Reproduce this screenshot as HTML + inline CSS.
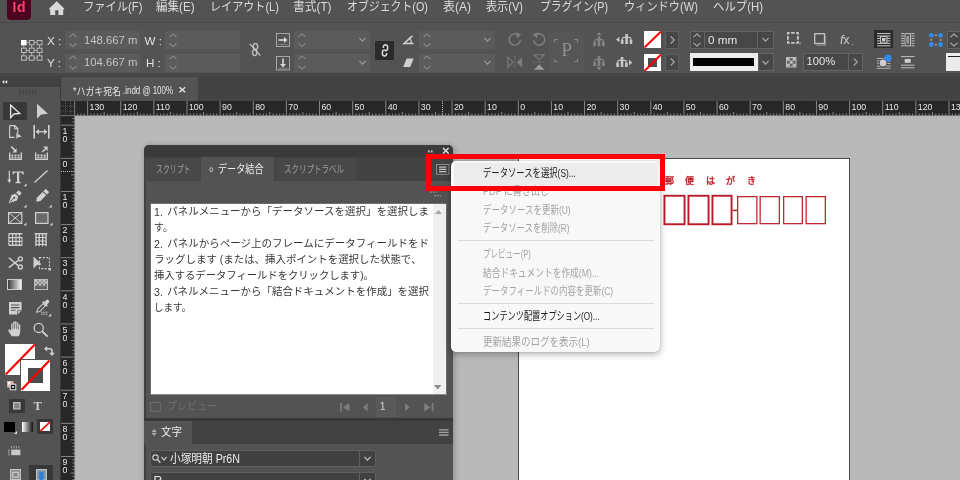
<!DOCTYPE html>
<html lang="ja"><head><meta charset="utf-8"><title>InDesign</title><style>
html,body{margin:0;padding:0}
body{width:960px;height:480px;overflow:hidden;position:relative;background:#b9b9b9;font-family:"Liberation Sans",sans-serif;filter:blur(0.45px)}
.b{position:absolute;box-sizing:border-box}
.l{position:absolute;white-space:nowrap}
.t{position:absolute;overflow:hidden;white-space:nowrap}
.t svg{position:absolute;left:0;top:0;display:block}
.t text{font-family:"Liberation Sans","Noto Sans CJK JP",sans-serif}
.i{position:absolute;display:block;overflow:visible}
</style></head>
<body>
<div class="b " style="left:0px;top:0px;width:960px;height:23px;background:#535353;"></div>
<div class="b " style="left:0px;top:22px;width:960px;height:2px;background:#494949;"></div>
<div class="b " style="left:0px;top:23px;width:960px;height:50px;background:#535353;"></div>
<div class="b " style="left:0px;top:73px;width:960px;height:3.5px;background:#474747;"></div>
<div class="b " style="left:0px;top:76px;width:960px;height:25px;background:#434343;"></div>
<div class="b " style="left:61px;top:77px;width:137px;height:24px;background:#535353;"></div>
<div class="b " style="left:61px;top:101px;width:899px;height:15px;background:#272727;"></div>
<div class="b " style="left:61px;top:101px;width:14px;height:379px;background:#272727;"></div>
<div class="b " style="left:0px;top:77px;width:60px;height:403px;background:#535353;"></div>
<div class="b " style="left:0px;top:76px;width:60px;height:11px;background:#414141;"></div>
<div class="b " style="left:60px;top:77px;width:1px;height:403px;background:#3a3a3a;"></div>
<div class="b" style="left:7px;top:-4px;width:24px;height:23.5px;background:#4b0520;border-radius:4px"></div><div class="l" style="left:12.6px;top:-0.6px;font-size:14px;line-height:16px;font-weight:bold;color:#ff3e6c;letter-spacing:0.6px">Id</div>
<svg class="i" style="left:49px;top:1px" width="16" height="15" viewBox="0 0 16 15" ><path d="M7.7 0.3 L15.2 7.4 L15.2 8.4 L14.2 8.4 L14.2 14 L9.4 14 L9.4 9.3 L6.2 9.3 L6.2 14 L1.2 14 L1.2 8.4 L0.2 8.4 L0.2 7.4 Z" fill="#d9d9d9"/></svg>
<div class="t " style="left:83px;top:-0.74px;width:61.5px;height:15.6px;font-size:12px"><svg width="61.5" height="15.6" viewBox="0 0 61.5 15.6"><text x="0" y="12" font-size="12" fill="#dcdcdc" textLength="59.5" lengthAdjust="spacingAndGlyphs">ファイル(F)</text></svg></div>
<div class="t " style="left:156px;top:-0.74px;width:40.5px;height:15.6px;font-size:12px"><svg width="40.5" height="15.6" viewBox="0 0 40.5 15.6"><text x="0" y="12" font-size="12" fill="#dcdcdc" textLength="38.5" lengthAdjust="spacingAndGlyphs">編集(E)</text></svg></div>
<div class="t " style="left:210px;top:-0.74px;width:71px;height:15.6px;font-size:12px"><svg width="71" height="15.6" viewBox="0 0 71 15.6"><text x="0" y="12" font-size="12" fill="#dcdcdc" textLength="69" lengthAdjust="spacingAndGlyphs">レイアウト(L)</text></svg></div>
<div class="t " style="left:292.5px;top:-0.74px;width:40.5px;height:15.6px;font-size:12px"><svg width="40.5" height="15.6" viewBox="0 0 40.5 15.6"><text x="0" y="12" font-size="12" fill="#dcdcdc" textLength="38.5" lengthAdjust="spacingAndGlyphs">書式(T)</text></svg></div>
<div class="t " style="left:347px;top:-0.74px;width:83px;height:15.6px;font-size:12px"><svg width="83" height="15.6" viewBox="0 0 83 15.6"><text x="0" y="12" font-size="12" fill="#dcdcdc" textLength="81" lengthAdjust="spacingAndGlyphs">オブジェクト(O)</text></svg></div>
<div class="t " style="left:443px;top:-0.74px;width:30px;height:15.6px;font-size:12px"><svg width="30" height="15.6" viewBox="0 0 30 15.6"><text x="0" y="12" font-size="12" fill="#dcdcdc" textLength="28" lengthAdjust="spacingAndGlyphs">表(A)</text></svg></div>
<div class="t " style="left:486px;top:-0.74px;width:39px;height:15.6px;font-size:12px"><svg width="39" height="15.6" viewBox="0 0 39 15.6"><text x="0" y="12" font-size="12" fill="#dcdcdc" textLength="37" lengthAdjust="spacingAndGlyphs">表示(V)</text></svg></div>
<div class="t " style="left:540px;top:-0.74px;width:70px;height:15.6px;font-size:12px"><svg width="70" height="15.6" viewBox="0 0 70 15.6"><text x="0" y="12" font-size="12" fill="#dcdcdc" textLength="68" lengthAdjust="spacingAndGlyphs">プラグイン(P)</text></svg></div>
<div class="t " style="left:624px;top:-0.74px;width:76px;height:15.6px;font-size:12px"><svg width="76" height="15.6" viewBox="0 0 76 15.6"><text x="0" y="12" font-size="12" fill="#dcdcdc" textLength="74" lengthAdjust="spacingAndGlyphs">ウィンドウ(W)</text></svg></div>
<div class="t " style="left:713px;top:-0.74px;width:52px;height:15.6px;font-size:12px"><svg width="52" height="15.6" viewBox="0 0 52 15.6"><text x="0" y="12" font-size="12" fill="#dcdcdc" textLength="50" lengthAdjust="spacingAndGlyphs">ヘルプ(H)</text></svg></div>
<svg class="i" style="left:20.9px;top:39.9px" width="22" height="21.5" viewBox="0 0 22 21.5" ><rect x="0" y="0" width="5.6" height="5.4" fill="#fff"/><rect x="8.3" y="0.45" width="4.8" height="4.4" fill="none" stroke="#c6c6c6" stroke-width="0.9"/><rect x="16.15" y="0.45" width="4.8" height="4.4" fill="none" stroke="#c6c6c6" stroke-width="0.9"/><rect x="0.45" y="8.15" width="4.8" height="4.4" fill="none" stroke="#c6c6c6" stroke-width="0.9"/><rect x="8.3" y="8.15" width="4.8" height="4.4" fill="none" stroke="#c6c6c6" stroke-width="0.9"/><rect x="16.15" y="8.15" width="4.8" height="4.4" fill="none" stroke="#c6c6c6" stroke-width="0.9"/><rect x="0.45" y="15.85" width="4.8" height="4.4" fill="none" stroke="#c6c6c6" stroke-width="0.9"/><rect x="8.3" y="15.85" width="4.8" height="4.4" fill="none" stroke="#c6c6c6" stroke-width="0.9"/><rect x="16.15" y="15.85" width="4.8" height="4.4" fill="none" stroke="#c6c6c6" stroke-width="0.9"/><path d="M5.6 2.7H7.85M13.45 2.7H15.7M5.6 10.4H7.85M13.45 10.4H15.7M5.6 18.1H7.85M13.45 18.1H15.7M2.8 5.4V7.7M2.8 13.1V15.4M10.65 5.4V7.7M10.65 13.1V15.4M18.5 5.4V7.7M18.5 13.1V15.4" stroke="#c6c6c6" stroke-width="0.9"/></svg><div class="l" style="left:47px;top:34.71px;font-size:11.6px;line-height:11.6px;color:#e2e2e2;">X :</div><div class="l" style="left:47px;top:57.11px;font-size:11.6px;line-height:11.6px;color:#e2e2e2;">Y :</div><div class="l" style="left:144.5px;top:34.71px;font-size:11.6px;line-height:11.6px;color:#e2e2e2;">W :</div><div class="l" style="left:146px;top:57.11px;font-size:11.6px;line-height:11.6px;color:#e2e2e2;">H :</div><div class="b " style="left:65px;top:31px;width:75px;height:18px;background:#5b5b5b;"></div><div class="b " style="left:65px;top:53.5px;width:75px;height:18.5px;background:#5b5b5b;"></div><svg class="i" style="left:68.5px;top:32.5px" width="8" height="14.5" viewBox="0 0 8 14.5" ><path d="M0.5 4.2L4 0.9L7.5 4.2M0.5 10.3L4 13.6L7.5 10.3" stroke="#8c8c8c" stroke-width="1.1" fill="none"/></svg><svg class="i" style="left:68.5px;top:55px" width="8" height="15" viewBox="0 0 8 15" ><path d="M0.5 4.2L4 0.9L7.5 4.2M0.5 10.8L4 14.1L7.5 10.8" stroke="#8c8c8c" stroke-width="1.1" fill="none"/></svg><div class="b " style="left:165px;top:31px;width:75px;height:18px;background:#5b5b5b;"></div><div class="b " style="left:165px;top:53.5px;width:75px;height:18.5px;background:#5b5b5b;"></div><svg class="i" style="left:168.5px;top:32.5px" width="8" height="14.5" viewBox="0 0 8 14.5" ><path d="M0.5 4.2L4 0.9L7.5 4.2M0.5 10.3L4 13.6L7.5 10.3" stroke="#8c8c8c" stroke-width="1.1" fill="none"/></svg><svg class="i" style="left:168.5px;top:55px" width="8" height="15" viewBox="0 0 8 15" ><path d="M0.5 4.2L4 0.9L7.5 4.2M0.5 10.8L4 14.1L7.5 10.8" stroke="#8c8c8c" stroke-width="1.1" fill="none"/></svg><div class="b " style="left:294px;top:31px;width:76px;height:18px;background:#5b5b5b;"></div><div class="b " style="left:294px;top:53.5px;width:76px;height:18.5px;background:#5b5b5b;"></div><svg class="i" style="left:297.5px;top:32.5px" width="8" height="14.5" viewBox="0 0 8 14.5" ><path d="M0.5 4.2L4 0.9L7.5 4.2M0.5 10.3L4 13.6L7.5 10.3" stroke="#8c8c8c" stroke-width="1.1" fill="none"/></svg><svg class="i" style="left:297.5px;top:55px" width="8" height="15" viewBox="0 0 8 15" ><path d="M0.5 4.2L4 0.9L7.5 4.2M0.5 10.8L4 14.1L7.5 10.8" stroke="#8c8c8c" stroke-width="1.1" fill="none"/></svg><div class="b " style="left:419px;top:31px;width:76px;height:18px;background:#5b5b5b;"></div><div class="b " style="left:419px;top:53.5px;width:76px;height:18.5px;background:#5b5b5b;"></div><svg class="i" style="left:422.5px;top:32.5px" width="8" height="14.5" viewBox="0 0 8 14.5" ><path d="M0.5 4.2L4 0.9L7.5 4.2M0.5 10.3L4 13.6L7.5 10.3" stroke="#8c8c8c" stroke-width="1.1" fill="none"/></svg><svg class="i" style="left:422.5px;top:55px" width="8" height="15" viewBox="0 0 8 15" ><path d="M0.5 4.2L4 0.9L7.5 4.2M0.5 10.8L4 14.1L7.5 10.8" stroke="#8c8c8c" stroke-width="1.1" fill="none"/></svg><div class="l" style="left:84px;top:34.85px;font-size:11.3px;line-height:11.3px;color:#c4c4c4;">148.667 m</div><div class="l" style="left:84px;top:57.25px;font-size:11.3px;line-height:11.3px;color:#c4c4c4;">104.667 m</div><svg class="i" style="left:358.5px;top:37px" width="7" height="5" viewBox="0 0 7 5" ><path d="M0.4 0.8L3.5 4.2L6.6 0.8" stroke="#9a9a9a" stroke-width="1.2" fill="none"/></svg><svg class="i" style="left:358.5px;top:60px" width="7" height="5" viewBox="0 0 7 5" ><path d="M0.4 0.8L3.5 4.2L6.6 0.8" stroke="#9a9a9a" stroke-width="1.2" fill="none"/></svg><svg class="i" style="left:483.5px;top:37px" width="7" height="5" viewBox="0 0 7 5" ><path d="M0.4 0.8L3.5 4.2L6.6 0.8" stroke="#9a9a9a" stroke-width="1.2" fill="none"/></svg><svg class="i" style="left:483.5px;top:60px" width="7" height="5" viewBox="0 0 7 5" ><path d="M0.4 0.8L3.5 4.2L6.6 0.8" stroke="#9a9a9a" stroke-width="1.2" fill="none"/></svg><svg class="i" style="left:248.5px;top:41.5px" width="12" height="15" viewBox="0 0 12 15" ><g fill="none" stroke="#bdbdbd" stroke-width="1.4"><ellipse cx="6.5" cy="4.4" rx="2.2" ry="3"/><ellipse cx="5.7" cy="10.6" rx="2.2" ry="3"/><path d="M0.8 1.8L11.4 13.6" stroke="#c8c8c8" stroke-width="1.2"/></g></svg><svg class="i" style="left:276.2px;top:33.2px" width="14" height="14" viewBox="0 0 14 14" ><rect x="0.5" y="0.5" width="13" height="13" fill="none" stroke="#a6a6a6"/><path d="M2.5 7H9" stroke="#d8d8d8" stroke-width="1.6"/><path d="M8 4L11.5 7L8 10Z" fill="#d8d8d8"/><path d="M2.5 11.5H11.5" stroke="#999" stroke-width="0.7"/></svg><svg class="i" style="left:276.2px;top:56.2px" width="14" height="14.5" viewBox="0 0 14 14.5" ><rect x="0.5" y="0.5" width="13" height="13.5" fill="none" stroke="#a6a6a6"/><path d="M7 2.5V9" stroke="#d8d8d8" stroke-width="1.6"/><path d="M4 8L7 11.5L10 8Z" fill="#d8d8d8"/><path d="M2.5 12.3H11.5" stroke="#999" stroke-width="0.7"/></svg><div class="b " style="left:375px;top:41px;width:19px;height:18.5px;background:#2a2a2a;border-radius:1px;"></div><svg class="i" style="left:379.5px;top:43px" width="10" height="15" viewBox="0 0 10 15" ><g fill="none" stroke="#d6d6d6" stroke-width="1.5"><ellipse cx="5.5" cy="4.8" rx="2.2" ry="3" stroke-dasharray="13.4 3.1" stroke-dashoffset="-7.8"/><ellipse cx="4.5" cy="10" rx="2.2" ry="3" stroke-dasharray="13.4 3.1" stroke-dashoffset="-16"/></g></svg><svg class="i" style="left:402.5px;top:34.5px" width="11" height="9.5" viewBox="0 0 11 9.5" ><path d="M9.4 0.8L1.2 8.5H10.6" fill="none" stroke="#d2d2d2" stroke-width="1.6"/><path d="M6.6 3.4Q8.6 5.6 8.4 8.5" fill="none" stroke="#d2d2d2" stroke-width="1.2"/></svg><svg class="i" style="left:402.5px;top:58px" width="11" height="9.5" viewBox="0 0 11 9.5" ><path d="M3.6 0.5H10.6L7.2 9H0.2Z" fill="#cfcfcf"/></svg><svg class="i" style="left:507px;top:32px" width="15" height="14.5" viewBox="0 0 15 14.5" ><path d="M10.5 2.6A5.6 5.6 0 1 0 13.4 8.2" fill="none" stroke="#7d7d7d" stroke-width="1.5"/><path d="M8.6 0.3L14.4 2.2L10.2 6.2Z" fill="#7d7d7d"/></svg><svg class="i" style="left:531.5px;top:32px" width="15" height="14.5" viewBox="0 0 15 14.5" ><path d="M4.5 2.6A5.6 5.6 0 1 1 1.6 8.2" fill="none" stroke="#7d7d7d" stroke-width="1.5"/><path d="M6.4 0.3L0.6 2.2L4.8 6.2Z" fill="#7d7d7d"/></svg><svg class="i" style="left:506.5px;top:55.5px" width="16" height="12.5" viewBox="0 0 16 12.5" ><path d="M0.8 1.2L6 6.2L0.8 11.2Z" fill="none" stroke="#7d7d7d" stroke-width="1.1"/><path d="M15.2 1L9.6 6.2L15.2 11.4Z" fill="#7d7d7d"/><path d="M7.8 0V12.5" stroke="#7d7d7d" stroke-width="0.9" stroke-dasharray="1.5 1"/></svg><svg class="i" style="left:532.5px;top:54px" width="12.5" height="16.5" viewBox="0 0 12.5 16.5" ><path d="M1.2 0.8L6.2 6L11.2 0.8Z" fill="none" stroke="#7d7d7d" stroke-width="1.1"/><path d="M1 15.7L6.2 10.2L11.4 15.7Z" fill="#9a9a9a"/><path d="M0 8.1H12.5" stroke="#7d7d7d" stroke-width="0.9" stroke-dasharray="1.5 1"/></svg><div class="b " style="left:549px;top:31px;width:35px;height:41px;background:#565656;"></div><svg class="i" style="left:554px;top:39px" width="24" height="23" viewBox="0 0 24 23" ><path d="M0.5 3V0.5H3.5M20.5 0.5H23.5V3M23.5 20V22.5H20.5M3.5 22.5H0.5V20" fill="none" stroke="#8e8e8e" stroke-width="1"/></svg><div class="l" style="left:561.2px;top:40.2px;font-size:19.5px;line-height:19.5px;color:#8e8e8e;font-family:'Liberation Serif',serif;">P</div><svg class="i" style="left:593.3px;top:32.4px" width="12" height="14.5" viewBox="0 0 12 14.5" ><g transform="translate(0 4.2)"><path d="M4.7 0h2.6v10h-2.6zM0.3 5.4h2.6v4.6h-2.6zM9.1 5.4h2.6v4.6h-2.6z" fill="#858585"/><path d="M1.6 5.6V4.9Q1.6 3.4 3.2 3.4H8.8Q10.4 3.4 10.4 4.9V5.6" fill="none" stroke="#858585" stroke-width="1.1"/></g><path d="M6 0L8.4 3H3.6Z" fill="#858585"/></svg><svg class="i" style="left:593.3px;top:55.6px" width="12" height="14.5" viewBox="0 0 12 14.5" ><g><path d="M4.7 0h2.6v10h-2.6zM0.3 5.4h2.6v4.6h-2.6zM9.1 5.4h2.6v4.6h-2.6z" fill="#858585"/><path d="M1.6 5.6V4.9Q1.6 3.4 3.2 3.4H8.8Q10.4 3.4 10.4 4.9V5.6" fill="none" stroke="#858585" stroke-width="1.1"/></g><path d="M6 14.2L8.6 10.8H3.4Z" fill="#858585"/></svg><svg class="i" style="left:615.6px;top:33.8px" width="17" height="10" viewBox="0 0 17 10" ><g transform="translate(4.6 0)"><path d="M4.7 0h2.6v10h-2.6zM0.3 5.4h2.6v4.6h-2.6zM9.1 5.4h2.6v4.6h-2.6z" fill="#c6c6c6"/><path d="M1.6 5.6V4.9Q1.6 3.4 3.2 3.4H8.8Q10.4 3.4 10.4 4.9V5.6" fill="none" stroke="#c6c6c6" stroke-width="1.1"/></g><path d="M0 5.6L3.4 2.8V8.4Z" fill="#c6c6c6"/></svg><svg class="i" style="left:615.6px;top:56.8px" width="17" height="10" viewBox="0 0 17 10" ><g><path d="M4.7 0h2.6v10h-2.6zM0.3 5.4h2.6v4.6h-2.6zM9.1 5.4h2.6v4.6h-2.6z" fill="#c6c6c6"/><path d="M1.6 5.6V4.9Q1.6 3.4 3.2 3.4H8.8Q10.4 3.4 10.4 4.9V5.6" fill="none" stroke="#c6c6c6" stroke-width="1.1"/></g><path d="M16.4 5.6L13 2.8V8.4Z" fill="#c6c6c6"/></svg><div class="b " style="left:643.5px;top:31px;width:17.5px;height:17px;background:#fff;"></div><svg class="i" style="left:643.5px;top:31px" width="17.5" height="17" viewBox="0 0 17.5 17" ><path d="M0.5 16.5L17 0.5" stroke="#f00" stroke-width="2"/></svg><div class="b " style="left:643.5px;top:53.5px;width:17.5px;height:17.5px;background:#fff;"></div><div class="b " style="left:648px;top:58px;width:8.5px;height:8.5px;background:#4e4e4e;"></div><svg class="i" style="left:643.5px;top:53.5px" width="17.5" height="17.5" viewBox="0 0 17.5 17.5" ><path d="M0.5 17L17 0.5" stroke="#f00" stroke-width="2"/></svg><div class="b " style="left:665px;top:31px;width:14px;height:17.5px;background:#474747;border:1px solid #5f5f5f;"></div><svg class="i" style="left:669.5px;top:35.7px" width="5" height="8" viewBox="0 0 5 8" ><path d="M0.8 0.5L4.2 4L0.8 7.5" stroke="#a6a6a6" stroke-width="1.2" fill="none"/></svg><div class="b " style="left:665px;top:53.5px;width:14px;height:17.5px;background:#474747;border:1px solid #5f5f5f;"></div><svg class="i" style="left:669.5px;top:58.2px" width="5" height="8" viewBox="0 0 5 8" ><path d="M0.8 0.5L4.2 4L0.8 7.5" stroke="#a6a6a6" stroke-width="1.2" fill="none"/></svg><div class="b " style="left:689.5px;top:31px;width:84px;height:17.5px;background:#474747;border:1px solid #636363;"></div><div class="b " style="left:704px;top:31px;width:1px;height:17.5px;background:#636363;"></div><div class="b " style="left:757px;top:31px;width:1px;height:17.5px;background:#636363;"></div><svg class="i" style="left:693px;top:32.5px" width="8" height="14" viewBox="0 0 8 14" ><path d="M0.5 4.2L4 0.9L7.5 4.2M0.5 9.8L4 13.1L7.5 9.8" stroke="#b4b4b4" stroke-width="1.1" fill="none"/></svg><div class="l" style="left:708px;top:33.56px;font-size:11.7px;line-height:11.7px;color:#e4e4e4;">0 mm</div><svg class="i" style="left:762px;top:37.3px" width="7" height="5" viewBox="0 0 7 5" ><path d="M0.4 0.8L3.5 4.2L6.6 0.8" stroke="#ababab" stroke-width="1.2" fill="none"/></svg><div class="b " style="left:690px;top:53px;width:67.5px;height:18px;background:#ececec;"></div><div class="b " style="left:693px;top:58px;width:61px;height:7.5px;background:#000;"></div><div class="b " style="left:757.5px;top:53px;width:16px;height:18px;background:#474747;border:1px solid #636363;"></div><svg class="i" style="left:762px;top:59.8px" width="7" height="5" viewBox="0 0 7 5" ><path d="M0.4 0.8L3.5 4.2L6.6 0.8" stroke="#ababab" stroke-width="1.2" fill="none"/></svg><svg class="i" style="left:786.8px;top:32.4px" width="14" height="13" viewBox="0 0 14 13" ><rect x="0.9" y="0.9" width="10" height="10" fill="none" stroke="#c4c4c4" stroke-width="1.8" stroke-dasharray="3.6 1.4" stroke-dashoffset="1.8"/><rect x="12.3" y="10.6" width="1.4" height="1.6" fill="#aaa"/></svg><svg class="i" style="left:814px;top:33px" width="12" height="13" viewBox="0 0 12 13" ><rect x="0.7" y="0.7" width="9.8" height="9.8" fill="none" stroke="#c4c4c4" stroke-width="1.3"/><path d="M2.4 12.2H11.6V2.6" fill="none" stroke="#8a8a8a" stroke-width="1.2"/></svg><div class="l" style="left:840px;top:33.58px;font-size:12.5px;line-height:12.5px;color:#c9c9c9;font-style:normal;letter-spacing:-0.3px;"><i>f</i>x</div><div class="b " style="left:851.8px;top:43.6px;width:1.4px;height:1.6px;background:#aaa;"></div><svg class="i" style="left:786.2px;top:57px" width="10.5" height="10.5" viewBox="0 0 10.5 10.5" ><rect x="0.5" y="0.5" width="9.5" height="9.5" fill="#666" stroke="#bdbdbd" stroke-width="1"/><path d="M1 1h2.8v2.8h-2.8zM6.7 1h2.8v2.8h-2.8zM3.8 3.8h2.9v2.9h-2.9zM1 6.7h2.8v2.8h-2.8zM6.7 6.7h2.8v2.8h-2.8z" fill="#bdbdbd"/></svg><div class="b " style="left:802.5px;top:53px;width:60.5px;height:18px;background:#474747;border:1px solid #636363;"></div><div class="b " style="left:847.5px;top:53px;width:1px;height:18px;background:#636363;"></div><div class="l" style="left:806.5px;top:55.5px;font-size:11.2px;line-height:11.2px;color:#e4e4e4;">100%</div><svg class="i" style="left:853px;top:58px" width="5" height="8" viewBox="0 0 5 8" ><path d="M0.8 0.5L4.2 4L0.8 7.5" stroke="#a6a6a6" stroke-width="1.2" fill="none"/></svg><div class="b " style="left:874px;top:30px;width:18.5px;height:18px;background:#2a2a2a;"></div><svg class="i" style="left:876.5px;top:32.5px" width="13.5" height="13.5" viewBox="0 0 13.5 13.5" ><path d="M0 0.6H13.5" stroke="#c8c8c8" stroke-width="1"/><path d="M0 3.05H13.5" stroke="#c8c8c8" stroke-width="1"/><path d="M0 5.5H13.5" stroke="#c8c8c8" stroke-width="1"/><path d="M0 7.95H13.5" stroke="#c8c8c8" stroke-width="1"/><path d="M0 10.4H13.5" stroke="#c8c8c8" stroke-width="1"/><path d="M0 12.85H13.5" stroke="#c8c8c8" stroke-width="1"/><rect x="3.6" y="3.6" width="6.3" height="6.3" fill="#2a2a2a" stroke="#c8c8c8" stroke-width="1"/><rect x="5" y="5" width="3.5" height="3.5" fill="#c8c8c8"/></svg><svg class="i" style="left:900.5px;top:32.5px" width="13.5" height="13.5" viewBox="0 0 13.5 13.5" ><path d="M0 0.6H3M10.5 0.6H13.5" stroke="#bdbdbd" stroke-width="1"/><path d="M0 3.05H3M10.5 3.05H13.5" stroke="#bdbdbd" stroke-width="1"/><path d="M0 5.5H3M10.5 5.5H13.5" stroke="#bdbdbd" stroke-width="1"/><path d="M0 7.95H3M10.5 7.95H13.5" stroke="#bdbdbd" stroke-width="1"/><path d="M0 10.4H3M10.5 10.4H13.5" stroke="#bdbdbd" stroke-width="1"/><path d="M0 12.85H3M10.5 12.85H13.5" stroke="#bdbdbd" stroke-width="1"/><rect x="4" y="0.6" width="5.5" height="12.3" fill="none" stroke="#bdbdbd" stroke-width="1"/><rect x="5.4" y="3" width="2.7" height="7.5" fill="#9a9a9a"/></svg><svg class="i" style="left:877px;top:54px" width="16" height="15" viewBox="0 0 16 15" ><path d="M0 4.5H13.5M0 7H13.5M0 9.5H13.5M0 12H13.5M0 14.3H13.5" stroke="#bdbdbd" stroke-width="0.9"/><circle cx="6" cy="9" r="4" fill="#cfcfcf" stroke="#535353" stroke-width="1"/><circle cx="11" cy="4" r="3.6" fill="#2d8cf0"/></svg><svg class="i" style="left:900.5px;top:56px" width="13.5" height="12.5" viewBox="0 0 13.5 12.5" ><path d="M0 0.6H13.5M0 9.2H13.5M0 11.8H13.5" stroke="#bdbdbd" stroke-width="1"/><rect x="3.7" y="3" width="6" height="3.8" fill="#cfcfcf"/></svg><svg class="i" style="left:929px;top:33px" width="14" height="14" viewBox="0 0 14 14" ><g fill="#2d8cf0"><circle cx="2.3" cy="2.3" r="2.4"/><circle cx="11.5" cy="2.3" r="2.4"/><circle cx="2.3" cy="11.5" r="2.4"/><circle cx="11.5" cy="11.5" r="2.4"/></g><g fill="#a08a6a"><rect x="5.7" y="1.3" width="2.4" height="1.8"/><rect x="5.7" y="10.7" width="2.4" height="1.8"/><rect x="1.3" y="5.8" width="1.8" height="2.2"/><rect x="10.7" y="5.8" width="1.8" height="2.2"/></g></svg><div class="b " style="left:946.5px;top:31px;width:20px;height:17.5px;background:#474747;border:1px solid #636363;"></div><svg class="i" style="left:950px;top:32.5px" width="8" height="14" viewBox="0 0 8 14" ><path d="M0.5 4.2L4 0.9L7.5 4.2M0.5 9.8L4 13.1L7.5 9.8" stroke="#b4b4b4" stroke-width="1.1" fill="none"/></svg><div class="b " style="left:946px;top:53px;width:20px;height:18px;background:#ececec;"></div><div class="b " style="left:948px;top:56px;width:20px;height:1.2px;background:#222;"></div>
<div class="t " style="left:73px;top:83.9px;width:50px;height:14.04px;font-size:10.8px"><svg width="50" height="14.04" viewBox="0 0 50 14.04"><text x="0" y="10.8" font-size="10.8" fill="#e6e6e6" textLength="48" lengthAdjust="spacingAndGlyphs">*ハガキ宛名</text></svg></div>
<div class="t " style="left:123px;top:84.08px;width:52px;height:13.26px;font-size:10.2px"><svg width="52" height="13.26" viewBox="0 0 52 13.26"><text x="0" y="10.2" font-size="10.2" fill="#e6e6e6" textLength="50" lengthAdjust="spacingAndGlyphs">.indd @ 100%</text></svg></div>
<svg class="i" style="left:178.8px;top:86.8px" width="6.6" height="5.6" viewBox="0 0 6.6 5.6"><path d="M0.4 0.3L6.2 5.3M6.2 0.3L0.4 5.3" stroke="#e4e4e4" stroke-width="1.4" fill="none"/></svg>
<svg class="i" style="left:61px;top:101px" width="899" height="15" viewBox="0 0 899 15" ><path d="M16.67 12.5V15M19.98 12.5V15M23.3 12.5V15M26.61 0V15M29.92 12.5V15M33.24 12.5V15M36.55 12.5V15M39.86 12.5V15M43.17 11V15M46.49 12.5V15M49.8 12.5V15M53.11 12.5V15M56.43 12.5V15M59.74 0V15M63.05 12.5V15M66.37 12.5V15M69.68 12.5V15M72.99 12.5V15M76.3 11V15M79.62 12.5V15M82.93 12.5V15M86.24 12.5V15M89.56 12.5V15M92.87 0V15M96.18 12.5V15M99.5 12.5V15M102.81 12.5V15M106.12 12.5V15M109.43 11V15M112.75 12.5V15M116.06 12.5V15M119.37 12.5V15M122.69 12.5V15M126 0V15M129.31 12.5V15M132.63 12.5V15M135.94 12.5V15M139.25 12.5V15M142.56 11V15M145.88 12.5V15M149.19 12.5V15M152.5 12.5V15M155.82 12.5V15M159.13 0V15M162.44 12.5V15M165.76 12.5V15M169.07 12.5V15M172.38 12.5V15M175.69 11V15M179.01 12.5V15M182.32 12.5V15M185.63 12.5V15M188.95 12.5V15M192.26 0V15M195.57 12.5V15M198.89 12.5V15M202.2 12.5V15M205.51 12.5V15M208.82 11V15M212.14 12.5V15M215.45 12.5V15M218.76 12.5V15M222.08 12.5V15M225.39 0V15M228.7 12.5V15M232.02 12.5V15M235.33 12.5V15M238.64 12.5V15M241.95 11V15M245.27 12.5V15M248.58 12.5V15M251.89 12.5V15M255.21 12.5V15M258.52 0V15M261.83 12.5V15M265.15 12.5V15M268.46 12.5V15M271.77 12.5V15M275.08 11V15M278.4 12.5V15M281.71 12.5V15M285.02 12.5V15M288.34 12.5V15M291.65 0V15M294.96 12.5V15M298.28 12.5V15M301.59 12.5V15M304.9 12.5V15M308.21 11V15M311.53 12.5V15M314.84 12.5V15M318.15 12.5V15M321.47 12.5V15M324.78 0V15M328.09 12.5V15M331.41 12.5V15M334.72 12.5V15M338.03 12.5V15M341.34 11V15M344.66 12.5V15M347.97 12.5V15M351.28 12.5V15M354.6 12.5V15M357.91 0V15M361.22 12.5V15M364.54 12.5V15M367.85 12.5V15M371.16 12.5V15M374.47 11V15M377.79 12.5V15M381.1 12.5V15M384.41 12.5V15M387.73 12.5V15M391.04 0V15M394.35 12.5V15M397.67 12.5V15M400.98 12.5V15M404.29 12.5V15M407.6 11V15M410.92 12.5V15M414.23 12.5V15M417.54 12.5V15M420.86 12.5V15M424.17 0V15M427.48 12.5V15M430.8 12.5V15M434.11 12.5V15M437.42 12.5V15M440.73 11V15M444.05 12.5V15M447.36 12.5V15M450.67 12.5V15M453.99 12.5V15M457.3 0V15M460.61 12.5V15M463.93 12.5V15M467.24 12.5V15M470.55 12.5V15M473.86 11V15M477.18 12.5V15M480.49 12.5V15M483.8 12.5V15M487.12 12.5V15M490.43 0V15M493.74 12.5V15M497.06 12.5V15M500.37 12.5V15M503.68 12.5V15M506.99 11V15M510.31 12.5V15M513.62 12.5V15M516.93 12.5V15M520.25 12.5V15M523.56 0V15M526.87 12.5V15M530.19 12.5V15M533.5 12.5V15M536.81 12.5V15M540.12 11V15M543.44 12.5V15M546.75 12.5V15M550.06 12.5V15M553.38 12.5V15M556.69 0V15M560 12.5V15M563.32 12.5V15M566.63 12.5V15M569.94 12.5V15M573.25 11V15M576.57 12.5V15M579.88 12.5V15M583.19 12.5V15M586.51 12.5V15M589.82 0V15M593.13 12.5V15M596.45 12.5V15M599.76 12.5V15M603.07 12.5V15M606.38 11V15M609.7 12.5V15M613.01 12.5V15M616.32 12.5V15M619.64 12.5V15M622.95 0V15M626.26 12.5V15M629.58 12.5V15M632.89 12.5V15M636.2 12.5V15M639.51 11V15M642.83 12.5V15M646.14 12.5V15M649.45 12.5V15M652.77 12.5V15M656.08 0V15M659.39 12.5V15M662.71 12.5V15M666.02 12.5V15M669.33 12.5V15M672.64 11V15M675.96 12.5V15M679.27 12.5V15M682.58 12.5V15M685.9 12.5V15M689.21 0V15M692.52 12.5V15M695.84 12.5V15M699.15 12.5V15M702.46 12.5V15M705.78 11V15M709.09 12.5V15M712.4 12.5V15M715.71 12.5V15M719.03 12.5V15M722.34 0V15M725.65 12.5V15M728.97 12.5V15M732.28 12.5V15M735.59 12.5V15M738.9 11V15M742.22 12.5V15M745.53 12.5V15M748.84 12.5V15M752.16 12.5V15M755.47 0V15M758.78 12.5V15M762.1 12.5V15M765.41 12.5V15M768.72 12.5V15M772.04 11V15M775.35 12.5V15M778.66 12.5V15M781.97 12.5V15M785.29 12.5V15M788.6 0V15M791.91 12.5V15M795.23 12.5V15M798.54 12.5V15M801.85 12.5V15M805.16 11V15M808.48 12.5V15M811.79 12.5V15M815.1 12.5V15M818.42 12.5V15M821.73 0V15M825.04 12.5V15M828.36 12.5V15M831.67 12.5V15M834.98 12.5V15M838.3 11V15M841.61 12.5V15M844.92 12.5V15M848.23 12.5V15M851.55 12.5V15M854.86 0V15M858.17 12.5V15M861.49 12.5V15M864.8 12.5V15M868.11 12.5V15M871.43 11V15M874.74 12.5V15M878.05 12.5V15M881.36 12.5V15M884.68 12.5V15M887.99 0V15M891.3 12.5V15M894.62 12.5V15M897.93 12.5V15" stroke="#909090" stroke-width="0.9" fill="none"/><path d="M0 14.6H899" stroke="#8a8a8a" stroke-width="0.8"/></svg><div class="l" style="left:89.51px;top:103.36px;font-size:8.8px;line-height:8.8px;color:#e8e8e8;">130</div><div class="l" style="left:122.64px;top:103.36px;font-size:8.8px;line-height:8.8px;color:#e8e8e8;">120</div><div class="l" style="left:155.77px;top:103.36px;font-size:8.8px;line-height:8.8px;color:#e8e8e8;">110</div><div class="l" style="left:188.9px;top:103.36px;font-size:8.8px;line-height:8.8px;color:#e8e8e8;">100</div><div class="l" style="left:222.03px;top:103.36px;font-size:8.8px;line-height:8.8px;color:#e8e8e8;">90</div><div class="l" style="left:255.16px;top:103.36px;font-size:8.8px;line-height:8.8px;color:#e8e8e8;">80</div><div class="l" style="left:288.29px;top:103.36px;font-size:8.8px;line-height:8.8px;color:#e8e8e8;">70</div><div class="l" style="left:321.42px;top:103.36px;font-size:8.8px;line-height:8.8px;color:#e8e8e8;">60</div><div class="l" style="left:354.55px;top:103.36px;font-size:8.8px;line-height:8.8px;color:#e8e8e8;">50</div><div class="l" style="left:387.68px;top:103.36px;font-size:8.8px;line-height:8.8px;color:#e8e8e8;">40</div><div class="l" style="left:420.81px;top:103.36px;font-size:8.8px;line-height:8.8px;color:#e8e8e8;">30</div><div class="l" style="left:453.94px;top:103.36px;font-size:8.8px;line-height:8.8px;color:#e8e8e8;">20</div><div class="l" style="left:487.07px;top:103.36px;font-size:8.8px;line-height:8.8px;color:#e8e8e8;">10</div><div class="l" style="left:520.2px;top:103.36px;font-size:8.8px;line-height:8.8px;color:#e8e8e8;">0</div><div class="l" style="left:553.33px;top:103.36px;font-size:8.8px;line-height:8.8px;color:#e8e8e8;">10</div><div class="l" style="left:586.46px;top:103.36px;font-size:8.8px;line-height:8.8px;color:#e8e8e8;">20</div><div class="l" style="left:619.59px;top:103.36px;font-size:8.8px;line-height:8.8px;color:#e8e8e8;">30</div><div class="l" style="left:652.72px;top:103.36px;font-size:8.8px;line-height:8.8px;color:#e8e8e8;">40</div><div class="l" style="left:685.85px;top:103.36px;font-size:8.8px;line-height:8.8px;color:#e8e8e8;">50</div><div class="l" style="left:718.98px;top:103.36px;font-size:8.8px;line-height:8.8px;color:#e8e8e8;">60</div><div class="l" style="left:752.11px;top:103.36px;font-size:8.8px;line-height:8.8px;color:#e8e8e8;">70</div><div class="l" style="left:785.24px;top:103.36px;font-size:8.8px;line-height:8.8px;color:#e8e8e8;">80</div><div class="l" style="left:818.37px;top:103.36px;font-size:8.8px;line-height:8.8px;color:#e8e8e8;">90</div><div class="l" style="left:851.5px;top:103.36px;font-size:8.8px;line-height:8.8px;color:#e8e8e8;">100</div><div class="l" style="left:884.63px;top:103.36px;font-size:8.8px;line-height:8.8px;color:#e8e8e8;">110</div><div class="l" style="left:917.76px;top:103.36px;font-size:8.8px;line-height:8.8px;color:#e8e8e8;">120</div><div class="l" style="left:950.89px;top:103.36px;font-size:8.8px;line-height:8.8px;color:#e8e8e8;">130</div><svg class="i" style="left:61px;top:101px" width="14" height="379" viewBox="0 0 14 379" ><path d="M11.5 17.54H14M11.5 20.86H14M0 24.17H14M11.5 27.48H14M11.5 30.8H14M11.5 34.11H14M11.5 37.42H14M10 40.74H14M11.5 44.05H14M11.5 47.36H14M11.5 50.67H14M11.5 53.99H14M0 57.3H14M11.5 60.61H14M11.5 63.93H14M11.5 67.24H14M11.5 70.55H14M10 73.87H14M11.5 77.18H14M11.5 80.49H14M11.5 83.8H14M11.5 87.12H14M0 90.43H14M11.5 93.74H14M11.5 97.06H14M11.5 100.37H14M11.5 103.68H14M10 107H14M11.5 110.31H14M11.5 113.62H14M11.5 116.93H14M11.5 120.25H14M0 123.56H14M11.5 126.87H14M11.5 130.19H14M11.5 133.5H14M11.5 136.81H14M10 140.12H14M11.5 143.44H14M11.5 146.75H14M11.5 150.06H14M11.5 153.38H14M0 156.69H14M11.5 160H14M11.5 163.32H14M11.5 166.63H14M11.5 169.94H14M10 173.26H14M11.5 176.57H14M11.5 179.88H14M11.5 183.19H14M11.5 186.51H14M0 189.82H14M11.5 193.13H14M11.5 196.45H14M11.5 199.76H14M11.5 203.07H14M10 206.39H14M11.5 209.7H14M11.5 213.01H14M11.5 216.32H14M11.5 219.64H14M0 222.95H14M11.5 226.26H14M11.5 229.58H14M11.5 232.89H14M11.5 236.2H14M10 239.52H14M11.5 242.83H14M11.5 246.14H14M11.5 249.45H14M11.5 252.77H14M0 256.08H14M11.5 259.39H14M11.5 262.71H14M11.5 266.02H14M11.5 269.33H14M10 272.65H14M11.5 275.96H14M11.5 279.27H14M11.5 282.58H14M11.5 285.9H14M0 289.21H14M11.5 292.52H14M11.5 295.84H14M11.5 299.15H14M11.5 302.46H14M10 305.78H14M11.5 309.09H14M11.5 312.4H14M11.5 315.71H14M11.5 319.03H14M0 322.34H14M11.5 325.65H14M11.5 328.97H14M11.5 332.28H14M11.5 335.59H14M10 338.91H14M11.5 342.22H14M11.5 345.53H14M11.5 348.84H14M11.5 352.16H14M0 355.47H14M11.5 358.78H14M11.5 362.1H14M11.5 365.41H14M11.5 368.72H14M10 372.04H14M11.5 375.35H14M11.5 378.66H14" stroke="#909090" stroke-width="0.9" fill="none"/><path d="M13.6 0V379" stroke="#8a8a8a" stroke-width="0.8"/></svg><svg class="i" style="left:442.2px;top:101px" width="1" height="15" viewBox="0 0 1 15" ><path d="M0.5 0V15" stroke="#bdbdbd" stroke-width="1" stroke-dasharray="1 1"/></svg><svg class="i" style="left:61px;top:170.6px" width="14" height="1" viewBox="0 0 14 1" ><path d="M0 0.5H14" stroke="#bdbdbd" stroke-width="1" stroke-dasharray="1 1"/></svg><svg class="i" style="left:61px;top:101px" width="14" height="15" viewBox="0 0 14 15" ><path d="M4.5 0V15M9.5 0V15M0 5H14M0 10H14" stroke="#6a6a6a" stroke-width="0.7" stroke-dasharray="1 1"/></svg><div class="l" style="left:62.6px;top:126.93px;font-size:8.8px;line-height:8.8px;color:#e8e8e8;">1</div><div class="l" style="left:62.6px;top:135.13px;font-size:8.8px;line-height:8.8px;color:#e8e8e8;">0</div><div class="l" style="left:62.6px;top:160.06px;font-size:8.8px;line-height:8.8px;color:#e8e8e8;">0</div><div class="l" style="left:62.6px;top:193.19px;font-size:8.8px;line-height:8.8px;color:#e8e8e8;">1</div><div class="l" style="left:62.6px;top:201.39px;font-size:8.8px;line-height:8.8px;color:#e8e8e8;">0</div><div class="l" style="left:62.6px;top:226.32px;font-size:8.8px;line-height:8.8px;color:#e8e8e8;">2</div><div class="l" style="left:62.6px;top:234.52px;font-size:8.8px;line-height:8.8px;color:#e8e8e8;">0</div><div class="l" style="left:62.6px;top:259.45px;font-size:8.8px;line-height:8.8px;color:#e8e8e8;">3</div><div class="l" style="left:62.6px;top:267.65px;font-size:8.8px;line-height:8.8px;color:#e8e8e8;">0</div><div class="l" style="left:62.6px;top:292.58px;font-size:8.8px;line-height:8.8px;color:#e8e8e8;">4</div><div class="l" style="left:62.6px;top:300.78px;font-size:8.8px;line-height:8.8px;color:#e8e8e8;">0</div><div class="l" style="left:62.6px;top:325.71px;font-size:8.8px;line-height:8.8px;color:#e8e8e8;">5</div><div class="l" style="left:62.6px;top:333.91px;font-size:8.8px;line-height:8.8px;color:#e8e8e8;">0</div><div class="l" style="left:62.6px;top:358.84px;font-size:8.8px;line-height:8.8px;color:#e8e8e8;">6</div><div class="l" style="left:62.6px;top:367.04px;font-size:8.8px;line-height:8.8px;color:#e8e8e8;">0</div><div class="l" style="left:62.6px;top:391.97px;font-size:8.8px;line-height:8.8px;color:#e8e8e8;">7</div><div class="l" style="left:62.6px;top:400.17px;font-size:8.8px;line-height:8.8px;color:#e8e8e8;">0</div><div class="l" style="left:62.6px;top:425.1px;font-size:8.8px;line-height:8.8px;color:#e8e8e8;">8</div><div class="l" style="left:62.6px;top:433.3px;font-size:8.8px;line-height:8.8px;color:#e8e8e8;">0</div><div class="l" style="left:62.6px;top:458.23px;font-size:8.8px;line-height:8.8px;color:#e8e8e8;">9</div><div class="l" style="left:62.6px;top:466.43px;font-size:8.8px;line-height:8.8px;color:#e8e8e8;">0</div>
<svg class="i" style="left:2.4px;top:79.6px" width="5.4" height="3.8" viewBox="0 0 5.4 3.8" ><path d="M0 1.9L2.3 0V3.8ZM2.9 1.9L5.2 0V3.8Z" fill="#ececec"/></svg><svg class="i" style="left:19px;top:89.4px" width="19" height="5.2" viewBox="0 0 19 5.2" ><path d="M0 2.6H19" stroke="#434343" stroke-width="5.2" stroke-dasharray="1.3 1.9"/></svg><div class="b " style="left:2.5px;top:101.5px;width:24px;height:18.5px;background:#383838;"></div><svg class="i" style="left:9px;top:103px" width="13" height="17" viewBox="0 0 13 17" ><path d="M1.6 2V14.6L5 11L10.8 10.5Z" fill="none" stroke="#e6e6e6" stroke-width="1.3" stroke-linejoin="miter"/></svg><svg class="i" style="left:35.5px;top:103px" width="13" height="17" viewBox="0 0 13 17" ><path d="M1 0.8V15.8L5.2 11.6L12 10.8Z" fill="#d0d0d0"/></svg><svg class="i" style="left:9px;top:124.5px" width="14" height="15" viewBox="0 0 14 15" ><path d="M0.6 0.6H5.8L8.8 3.6V8M5.6 12.4H0.6V0.6M5.6 0.8V3.8H8.6" fill="none" stroke="#d0d0d0" stroke-width="1.1"/><path d="M7.4 7.4V14L9.2 12.2L12.8 11.8Z" fill="#d0d0d0"/></svg><svg class="i" style="left:32.5px;top:124.5px" width="17" height="13.5" viewBox="0 0 17 13.5" ><path d="M1.2 0V13.5M15.8 0V13.5" stroke="#d0d0d0" stroke-width="1.6"/><path d="M4 6.75H13" stroke="#d0d0d0" stroke-width="1.2"/><path d="M2.6 6.75L6 4V9.5ZM14.4 6.75L11 4V9.5Z" fill="#d0d0d0"/></svg><svg class="i" style="left:8.5px;top:146px" width="14" height="14.5" viewBox="0 0 14 14.5" ><path d="M0.7 6.5V13.4H12.3V6.5" fill="none" stroke="#d0d0d0" stroke-width="1.4"/><path d="M2.4 8.4h2v2h-2zM5.5 8.4h2v2h-2zM8.6 8.4h2v2h-2zM2.4 11h2v1.6h-2zM5.5 11h2v1.6h-2zM8.6 11h2v1.6h-2z" fill="#d0d0d0"/><path d="M2.2 0.6L6.2 4.6" stroke="#d0d0d0" stroke-width="1.5"/><path d="M7.6 2.2V6.4H3.4Z" fill="#d0d0d0"/></svg><svg class="i" style="left:34.5px;top:146px" width="14" height="14.5" viewBox="0 0 14 14.5" ><path d="M0.7 6.5V13.4H12.3V6.5" fill="none" stroke="#d0d0d0" stroke-width="1.4"/><path d="M2.4 8.4h2v2h-2zM5.5 8.4h2v2h-2zM8.6 8.4h2v2h-2zM2.4 11h2v1.6h-2zM5.5 11h2v1.6h-2zM8.6 11h2v1.6h-2z" fill="#d0d0d0"/><path d="M7.2 6L11 2.2" stroke="#d0d0d0" stroke-width="1.5"/><path d="M8.2 0.6H12.6V5Z" fill="#d0d0d0"/></svg><svg class="i" style="left:6.5px;top:169.5px" width="21" height="17" viewBox="0 0 21 17" ><path d="M2.3 0.8V10.8" stroke="#d0d0d0" stroke-width="1.2"/><path d="M0.3 9.6L2.3 13.2L4.3 9.6Z" fill="#d0d0d0"/><path d="M5.6 1.4H16.6V4.6H15.6Q15.4 2.6 13.6 2.6H12.2V11Q12.2 12.2 13.8 12.2V13.2H8.4V12.2Q10 12.2 10 11V2.6H8.6Q6.8 2.6 6.6 4.6H5.6Z" fill="#d0d0d0"/><path d="M19.6 13.2V16.2H16.6Z" fill="#d0d0d0"/></svg><svg class="i" style="left:34px;top:170px" width="14" height="13" viewBox="0 0 14 13" ><path d="M0.5 12.5L13.5 0.5" stroke="#d0d0d0" stroke-width="1.3"/></svg><svg class="i" style="left:7.5px;top:190px" width="19" height="19" viewBox="0 0 19 19" ><g transform="rotate(45 7 7)"><path d="M7 16L3.2 8L5 4.4H9L10.8 8Z" fill="#d0d0d0"/><path d="M7 14V8.6" stroke="#535353" stroke-width="0.9"/><circle cx="7" cy="8" r="1" fill="#535353"/><rect x="4.8" y="-0.4" width="4.4" height="3.6" fill="#d0d0d0"/></g><path d="M18.6 14.5V17.5H15.6Z" fill="#d0d0d0"/></svg><svg class="i" style="left:34px;top:190px" width="19" height="19" viewBox="0 0 19 19" ><g transform="rotate(45 7 7)"><path d="M4.6 2.2H9.4V10.2L7 14.6L4.6 10.2Z" fill="#d0d0d0"/><rect x="4.6" y="-2.2" width="4.8" height="3.4" fill="#d0d0d0"/><path d="M6.2 12.6L7 14.6L7.8 12.6Z" fill="#535353"/></g><path d="M17.8 14.5V17.5H14.8Z" fill="#d0d0d0"/></svg><svg class="i" style="left:7.5px;top:212px" width="19" height="16" viewBox="0 0 19 16" ><rect x="0.6" y="0.6" width="13.2" height="10.8" fill="none" stroke="#d0d0d0" stroke-width="1.2"/><path d="M0.6 0.6L13.8 11.4M13.8 0.6L0.6 11.4" stroke="#d0d0d0" stroke-width="1"/><path d="M18.4 10.6V13.6H15.4Z" fill="#d0d0d0"/></svg><svg class="i" style="left:34.5px;top:212px" width="19" height="16" viewBox="0 0 19 16" ><rect x="0.6" y="0.6" width="12.4" height="10.8" fill="#6a6a6a" stroke="#d0d0d0" stroke-width="1.2"/><path d="M17.6 10.6V13.6H14.6Z" fill="#d0d0d0"/></svg><svg class="i" style="left:7.5px;top:233px" width="15" height="13" viewBox="0 0 15 13" ><path d="M0.7 0.7H14.3M0.7 4.6H14.3M0.7 8.4H14.3M0.7 12.3H14.3" stroke="#d0d0d0" stroke-width="1.4"/><path d="M0.9 0.7V12.3M4.6 0.7V12.3M8 0.7V12.3M11.4 0.7V12.3" stroke="#d0d0d0" stroke-width="1.1"/><path d="M14 4.6V12.3" stroke="#d0d0d0" stroke-width="0.9"/></svg><svg class="i" style="left:34px;top:232.5px" width="14" height="14" viewBox="0 0 14 14" ><path d="M0.7 0.7H13.3" stroke="#d0d0d0" stroke-width="1.4"/><path d="M2 0.7V13.3M5.2 0.7V13.3M8.6 0.7V13.3M12 0.7V13.3" stroke="#d0d0d0" stroke-width="1.4"/><path d="M2 4.5H12M2 8H12M2 11.5H12" stroke="#d0d0d0" stroke-width="1"/></svg><svg class="i" style="left:7.5px;top:256px" width="16" height="14.5" viewBox="0 0 16 14.5" ><g fill="none" stroke="#d0d0d0" stroke-width="1.4"><path d="M0.8 1.8L10.2 9.6M0.8 11.6L10.4 4.2"/><circle cx="12.3" cy="2.9" r="2"/><circle cx="12.3" cy="11" r="2"/></g></svg><svg class="i" style="left:32.5px;top:255.5px" width="19" height="15" viewBox="0 0 19 15" ><path d="M0.5 0.5V12.5L4 9L8.6 8.4Z" fill="#d0d0d0"/><rect x="6.4" y="1.6" width="10" height="11" fill="none" stroke="#d0d0d0" stroke-width="1.1" stroke-dasharray="2 1.4"/><path d="M18 11.4V14.4H15Z" fill="#d0d0d0"/></svg><div class="b" style="left:7px;top:278.5px;width:15px;height:11.5px;border:1px solid #cfcfcf;background:linear-gradient(90deg,#3c3c3c,#f4f4f4)"></div><div class="b" style="left:34.3px;top:278.5px;width:14px;height:11.5px;border:1px solid #bdbdbd;background:linear-gradient(180deg,#9a9a9a,#5a5a5a)"></div><svg class="i" style="left:35.3px;top:279.5px" width="12" height="5.5" viewBox="0 0 12 5.5" ><path d="M0 0h2v1.8h-2zM4 0h2v1.8h-2zM8 0h2v1.8h-2zM2 1.8h2v1.8h-2zM6 1.8h2v1.8h-2zM10 1.8h2v1.8h-2zM0 3.6h2v1.8h-2zM4 3.6h2v1.8h-2zM8 3.6h2v1.8h-2z" fill="#c8c8c8"/></svg><svg class="i" style="left:8.5px;top:302px" width="13" height="13" viewBox="0 0 13 13" ><path d="M0 0H12.6V8.6L8.6 12.6H0Z" fill="#d0d0d0"/><path d="M2 3H10.4M2 5.6H10.4M2 8.2H6.6" stroke="#535353" stroke-width="1.1"/><path d="M8.6 12.6V8.6H12.6" fill="none" stroke="#535353" stroke-width="0.8"/></svg><svg class="i" style="left:33px;top:300.5px" width="19" height="16" viewBox="0 0 19 16" ><g transform="rotate(45 9 6)"><rect x="7.2" y="-3.4" width="3.6" height="4.6" rx="1.4" fill="#d0d0d0"/><rect x="5.8" y="0.8" width="6.4" height="1.8" fill="#d0d0d0"/><path d="M7.4 2.8H10.6V10.6L9 13.4L7.4 10.6Z" fill="none" stroke="#d0d0d0" stroke-width="1"/></g><path d="M8 11.2H15M8 13.2H15" stroke="#d0d0d0" stroke-width="1" stroke-dasharray="1.4 0.8"/><path d="M18.2 12.6V15.6H15.2Z" fill="#d0d0d0"/></svg><svg class="i" style="left:8px;top:320.5px" width="14" height="15.5" viewBox="0 0 14 15.5" ><path d="M3.6 15.2Q2.4 13 0.6 10.2Q-0.2 8.6 1 8.2Q2 8 3.2 9.8V3.4Q3.2 2.4 4 2.4Q4.9 2.4 4.9 3.4V1.8Q4.9 0.8 5.8 0.8Q6.7 0.8 6.7 1.8V1.2Q6.7 0.2 7.6 0.2Q8.6 0.2 8.6 1.2V2.2Q8.6 1.4 9.5 1.4Q10.4 1.4 10.4 2.4V4.6Q10.6 3.6 11.4 3.6Q12.3 3.6 12.3 4.6V10Q12.3 13 10.6 15.2Z" fill="#d0d0d0"/><path d="M4.9 3.4V8M6.7 1.8V7.6M8.6 2.2V7.8M10.4 4.6V8.4" stroke="#535353" stroke-width="0.7"/></svg><svg class="i" style="left:33px;top:321.5px" width="16" height="16" viewBox="0 0 16 16" ><circle cx="5.7" cy="5.9" r="4.6" fill="none" stroke="#d0d0d0" stroke-width="1.3"/><path d="M9.2 9.4L14.6 14.6" stroke="#d0d0d0" stroke-width="1.9"/></svg><div class="b " style="left:5px;top:343.6px;width:30.4px;height:31.2px;background:#fff;"></div><svg class="i" style="left:5px;top:343.6px" width="30.4" height="31.2" viewBox="0 0 30.4 31.2" ><path d="M0.6 30.6L29.8 0.6" stroke="#f00" stroke-width="2.2"/></svg><div class="b " style="left:20px;top:359.4px;width:31px;height:32.4px;background:#535353;"></div><div class="b " style="left:21px;top:360.4px;width:29px;height:30.4px;background:#fff;"></div><div class="b " style="left:28px;top:367.7px;width:15.3px;height:15.4px;background:#4c4c4c;"></div><svg class="i" style="left:21px;top:360.4px" width="29" height="30.4" viewBox="0 0 29 30.4" ><path d="M0.6 29.8L28.4 0.6" stroke="#f00" stroke-width="2.2"/></svg><svg class="i" style="left:43.5px;top:345.5px" width="11" height="10" viewBox="0 0 11 10" ><path d="M2.6 2.8H5.6Q8 2.8 8 5.2V7.2" fill="none" stroke="#d0d0d0" stroke-width="1.5"/><path d="M0 2.8L3.2 0V5.6Z" fill="#d0d0d0"/><path d="M8 10L5.2 6.8H10.8Z" fill="#d0d0d0"/></svg><svg class="i" style="left:6.5px;top:380.5px" width="9.5" height="9.5" viewBox="0 0 9.5 9.5" ><rect x="0.5" y="0.5" width="5.6" height="5.6" fill="#fff" stroke="#ccc" stroke-width="0.6"/><path d="M1 5.5L5.5 1" stroke="#f00" stroke-width="0.9"/><rect x="3.2" y="3.2" width="5.6" height="5.6" fill="#111" stroke="#e8e8e8" stroke-width="1"/><rect x="4.9" y="4.9" width="2.2" height="2.2" fill="#bbb"/></svg><div class="b " style="left:9.3px;top:399.3px;width:15.4px;height:13.6px;background:#383838;"></div><svg class="i" style="left:13.2px;top:402.4px" width="7.6" height="7.6" viewBox="0 0 7.6 7.6" ><rect x="0.6" y="0.6" width="6.4" height="6.4" fill="#858585" stroke="#c4c4c4" stroke-width="1.1"/></svg><div class="l" style="left:33.4px;top:399.6px;font-size:12.5px;line-height:13px;font-weight:bold;color:#cfcfcf;font-family:'Liberation Serif',serif">T</div><div class="b " style="left:4px;top:421.8px;width:10.8px;height:9.8px;background:#000;"></div><svg class="i" style="left:14px;top:431px" width="3" height="3" viewBox="0 0 3 3" ><path d="M3 0V3H0Z" fill="#e0e0e0"/></svg><div class="b" style="left:21.5px;top:421.8px;width:11.5px;height:9.8px;background:linear-gradient(90deg,#fff,#111)"></div><div class="b " style="left:36.7px;top:419px;width:16.2px;height:14.8px;background:#383838;"></div><div class="b " style="left:39.8px;top:421.8px;width:10px;height:9.6px;background:#fff;"></div><svg class="i" style="left:39.8px;top:421.8px" width="10" height="9.6" viewBox="0 0 10 9.6" ><path d="M0.4 9.2L9.6 0.4" stroke="#f00" stroke-width="1.6"/></svg><svg class="i" style="left:9.3px;top:446px" width="12" height="10" viewBox="0 0 12 10" ><path d="M2.6 0V2.4M5 0V2.4M7.4 0V2.4M9.8 0V2.4" stroke="#aaa" stroke-width="0.9"/><rect x="2.2" y="3.6" width="9.2" height="5.6" fill="#c9c9c9"/><path d="M0 3.6V9.2" stroke="#bbb" stroke-width="1.2" stroke-dasharray="1.4 0.8"/></svg><svg class="i" style="left:9.9px;top:469px" width="11" height="11" viewBox="0 0 11 11" ><rect x="0.6" y="0.6" width="9.8" height="10" fill="#8a8a8a" stroke="#c9c9c9" stroke-width="1.1"/><rect x="2.8" y="3.2" width="5.4" height="5" fill="none" stroke="#ddd" stroke-width="0.9"/></svg><div class="b " style="left:28.7px;top:464.8px;width:24.2px;height:16px;background:#383838;"></div><svg class="i" style="left:35.8px;top:469px" width="11" height="11" viewBox="0 0 11 11" ><rect x="0.6" y="0.6" width="9.8" height="10.4" fill="#7f93a8" stroke="#c9c9c9" stroke-width="1.1"/><rect x="3.4" y="3" width="4" height="8" fill="#2f7fd6"/></svg>
<div class="b " style="left:518px;top:158px;width:332px;height:330px;background:#fff;border:1px solid #4a4a4a;box-sizing:border-box;"></div>
<div class="t " style="left:664.5px;top:174.67px;width:11px;height:11.18px;font-size:8.6px"><svg width="11" height="11.18" viewBox="0 0 11 11.18"><text x="0" y="8.6" font-size="8.6" fill="#c0141f" stroke="#c0141f" stroke-width="0.35" textLength="9" lengthAdjust="spacingAndGlyphs">郵</text></svg></div><div class="t " style="left:685px;top:174.67px;width:11px;height:11.18px;font-size:8.6px"><svg width="11" height="11.18" viewBox="0 0 11 11.18"><text x="0" y="8.6" font-size="8.6" fill="#c0141f" stroke="#c0141f" stroke-width="0.35" textLength="9" lengthAdjust="spacingAndGlyphs">便</text></svg></div><div class="t " style="left:705.5px;top:174.67px;width:11px;height:11.18px;font-size:8.6px"><svg width="11" height="11.18" viewBox="0 0 11 11.18"><text x="0" y="8.6" font-size="8.6" fill="#c0141f" stroke="#c0141f" stroke-width="0.35" textLength="9" lengthAdjust="spacingAndGlyphs">は</text></svg></div><div class="t " style="left:726px;top:174.67px;width:11px;height:11.18px;font-size:8.6px"><svg width="11" height="11.18" viewBox="0 0 11 11.18"><text x="0" y="8.6" font-size="8.6" fill="#c0141f" stroke="#c0141f" stroke-width="0.35" textLength="9" lengthAdjust="spacingAndGlyphs">が</text></svg></div><div class="t " style="left:746.5px;top:174.67px;width:11px;height:11.18px;font-size:8.6px"><svg width="11" height="11.18" viewBox="0 0 11 11.18"><text x="0" y="8.6" font-size="8.6" fill="#c0141f" stroke="#c0141f" stroke-width="0.35" textLength="9" lengthAdjust="spacingAndGlyphs">き</text></svg></div><svg class="i" style="left:660px;top:190px" width="170" height="40" viewBox="0 0 170 40" ><rect x="4.45" y="5.75" width="20.1" height="28.5" fill="#fff" stroke="#ba1a28" stroke-width="1.9"/><rect x="28.45" y="5.75" width="20.1" height="28.5" fill="#fff" stroke="#ba1a28" stroke-width="1.9"/><rect x="52.45" y="5.75" width="19.1" height="28.5" fill="#fff" stroke="#ba1a28" stroke-width="1.9"/><rect x="77.65" y="6.65" width="19.2" height="27" fill="#fff" stroke="#c02a36" stroke-width="1.3"/><rect x="100.15" y="6.65" width="19.2" height="27" fill="#fff" stroke="#c02a36" stroke-width="1.3"/><rect x="123.65" y="6.65" width="18.7" height="27" fill="#fff" stroke="#c02a36" stroke-width="1.3"/><rect x="146.15" y="6.65" width="19.2" height="27" fill="#fff" stroke="#c02a36" stroke-width="1.3"/><path d="M72.5 20.4H77" stroke="#b5121d" stroke-width="1.4"/></svg>
<div class="b " style="left:144px;top:145px;width:309px;height:340px;background:#535353;border-radius:5px 5px 0 0;box-shadow:1px 1px 6px rgba(0,0,0,0.28);"></div><div class="b " style="left:144px;top:145px;width:309px;height:12px;background:#3b3b3b;border-radius:5px 5px 0 0;"></div><div class="b " style="left:144px;top:157px;width:309px;height:23.5px;background:#434343;"></div><div class="b " style="left:144px;top:157px;width:1.5px;height:323px;background:#414141;"></div><div class="b " style="left:201px;top:157px;width:73px;height:24px;background:#535353;"></div><div class="b " style="left:274.5px;top:158px;width:81px;height:22.5px;background:#484848;"></div><div class="b " style="left:145px;top:158px;width:55.5px;height:22.5px;background:#484848;"></div><div class="t " style="left:156px;top:162.79px;width:36.5px;height:13.65px;font-size:10.5px"><svg width="36.5" height="13.65" viewBox="0 0 36.5 13.65"><text x="0" y="10.5" font-size="10.5" fill="#9d9d9d" textLength="34.5" lengthAdjust="spacingAndGlyphs">スクリプト</text></svg></div><svg class="i" style="left:208.8px;top:167.4px" width="4.6" height="5.4" viewBox="0 0 4.6 5.4" ><ellipse cx="2.3" cy="2.7" rx="1.5" ry="2" fill="none" stroke="#cfcfcf" stroke-width="0.9"/></svg><div class="t " style="left:217.5px;top:162.48px;width:47.5px;height:14.3px;font-size:11px"><svg width="47.5" height="14.3" viewBox="0 0 47.5 14.3"><text x="0" y="11" font-size="11" fill="#ececec" textLength="45.5" lengthAdjust="spacingAndGlyphs">データ結合</text></svg></div><div class="t " style="left:283.5px;top:162.79px;width:62px;height:13.65px;font-size:10.5px"><svg width="62" height="13.65" viewBox="0 0 62 13.65"><text x="0" y="10.5" font-size="10.5" fill="#9d9d9d" textLength="60" lengthAdjust="spacingAndGlyphs">スクリプトラベル</text></svg></div><svg class="i" style="left:428px;top:150px" width="5" height="3" viewBox="0 0 5 3" ><rect x="0" y="0.3" width="1.7" height="2.2" fill="#bdbdbd"/><rect x="2.9" y="0.3" width="1.7" height="2.2" fill="#bdbdbd"/></svg><svg class="i" style="left:443.2px;top:148px" width="5.6" height="5.6" viewBox="0 0 5.6 5.6" ><path d="M0 0L5.6 5.6M5.6 0L0 5.6" stroke="#e4e4e4" stroke-width="1.4" fill="none"/></svg><svg class="i" style="left:435.6px;top:163.7px" width="13.4" height="10.8" viewBox="0 0 13.4 10.8" ><rect x="0.5" y="0.5" width="12.4" height="9.8" fill="#3f3f3f" stroke="#8c8c8c" stroke-width="1"/><path d="M3 3.2H10.4M3 5.4H10.4M3 7.6H10.4" stroke="#c4c4c4" stroke-width="1.2"/></svg><svg class="i" style="left:430px;top:191px" width="12" height="6" viewBox="0 0 12 6" ><path d="M0 1.2H7M4 4.6H11" stroke="#8a8a8a" stroke-width="1.2" stroke-dasharray="2 1"/></svg><div class="b " style="left:150px;top:203px;width:297px;height:192px;background:#fff;border:1px solid #6e6e6e;border-bottom-color:#8a8a8a;"></div><div class="b " style="left:432.5px;top:204px;width:13.5px;height:190px;background:#f0f0f0;"></div><svg class="i" style="left:434.6px;top:209.6px" width="7" height="4" viewBox="0 0 7 4" ><path d="M3.5 0L7 4H0Z" fill="#a6a6a6"/></svg><svg class="i" style="left:434.4px;top:385px" width="7.4" height="4.4" viewBox="0 0 7.4 4.4" ><path d="M0 0H7.4L3.7 4.4Z" fill="#8c8c8c"/></svg><div class="l" style="left:154px;top:206.99px;font-size:10.6px;line-height:10.6px;color:#363636;">1.</div><div class="t " style="left:166.8px;top:205.41px;width:264.2px;height:13.39px;font-size:10.3px"><svg width="264.2" height="13.39" viewBox="0 0 264.2 13.39"><text x="0" y="10.3" font-size="10.3" fill="#363636" textLength="262.2" lengthAdjust="spacingAndGlyphs">パネルメニューから「データソースを選択」を選択しま</text></svg></div><div class="t " style="left:154px;top:221.41px;width:21px;height:13.39px;font-size:10.3px"><svg width="21" height="13.39" viewBox="0 0 21 13.39"><text x="0" y="10.3" font-size="10.3" fill="#363636" textLength="19" lengthAdjust="spacingAndGlyphs">す。</text></svg></div><div class="l" style="left:154px;top:238.99px;font-size:10.6px;line-height:10.6px;color:#363636;">2.</div><div class="t " style="left:166.8px;top:237.41px;width:264.2px;height:13.39px;font-size:10.3px"><svg width="264.2" height="13.39" viewBox="0 0 264.2 13.39"><text x="0" y="10.3" font-size="10.3" fill="#363636" textLength="262.2" lengthAdjust="spacingAndGlyphs">パネルからページ上のフレームにデータフィールドをド</text></svg></div><div class="t " style="left:154px;top:253.41px;width:269.5px;height:13.39px;font-size:10.3px"><svg width="269.5" height="13.39" viewBox="0 0 269.5 13.39"><text x="0" y="10.3" font-size="10.3" fill="#363636" textLength="267.5" lengthAdjust="spacingAndGlyphs">ラッグします (または、挿入ポイントを選択した状態で、</text></svg></div><div class="t " style="left:154px;top:269.41px;width:222px;height:13.39px;font-size:10.3px"><svg width="222" height="13.39" viewBox="0 0 222 13.39"><text x="0" y="10.3" font-size="10.3" fill="#363636" textLength="220" lengthAdjust="spacingAndGlyphs">挿入するデータフィールドをクリックします)。</text></svg></div><div class="l" style="left:154px;top:286.99px;font-size:10.6px;line-height:10.6px;color:#363636;">3.</div><div class="t " style="left:166.8px;top:285.41px;width:264.2px;height:13.39px;font-size:10.3px"><svg width="264.2" height="13.39" viewBox="0 0 264.2 13.39"><text x="0" y="10.3" font-size="10.3" fill="#363636" textLength="262.2" lengthAdjust="spacingAndGlyphs">パネルメニューから「結合ドキュメントを作成」を選択</text></svg></div><div class="t " style="left:154px;top:301.41px;width:39px;height:13.39px;font-size:10.3px"><svg width="39" height="13.39" viewBox="0 0 39 13.39"><text x="0" y="10.3" font-size="10.3" fill="#363636" textLength="37" lengthAdjust="spacingAndGlyphs">します。</text></svg></div><svg class="i" style="left:150.4px;top:401.6px" width="11" height="10" viewBox="0 0 11 10" ><rect x="0.5" y="0.5" width="9.8" height="8.8" fill="none" stroke="#6f6f6f" stroke-width="1"/></svg><div class="t " style="left:167px;top:399.48px;width:52px;height:14.3px;font-size:11px"><svg width="52" height="14.3" viewBox="0 0 52 14.3"><text x="0" y="11" font-size="11" fill="#6d6d6d" textLength="50" lengthAdjust="spacingAndGlyphs">プレビュー</text></svg></div><svg class="i" style="left:339.5px;top:402.8px" width="10" height="8.4" viewBox="0 0 10 8.4" ><path d="M0.9 0V8.4" stroke="#7c7c7c" stroke-width="1.8"/><path d="M3 4.2L9.4 0V8.4Z" fill="#7c7c7c"/></svg><svg class="i" style="left:363.4px;top:402.8px" width="5" height="8.4" viewBox="0 0 5 8.4" ><path d="M0 4.2L4.6 0V8.4Z" fill="#7c7c7c"/></svg><div class="b " style="left:376px;top:397px;width:20px;height:20px;background:#595959;"></div><div class="l" style="left:379.8px;top:402.09px;font-size:10.4px;line-height:10.4px;color:#d0d0d0;">1</div><svg class="i" style="left:405px;top:402.8px" width="5" height="8.4" viewBox="0 0 5 8.4" ><path d="M4.6 4.2L0 0V8.4Z" fill="#7c7c7c"/></svg><svg class="i" style="left:423.6px;top:402.8px" width="10" height="8.4" viewBox="0 0 10 8.4" ><path d="M8.6 0V8.4" stroke="#7c7c7c" stroke-width="1.8"/><path d="M6.6 4.2L0.2 0V8.4Z" fill="#7c7c7c"/></svg><div class="b " style="left:144px;top:417.5px;width:309px;height:3.2px;background:#383838;"></div><div class="b " style="left:144px;top:420.7px;width:309px;height:23px;background:#424242;"></div><div class="b " style="left:144px;top:420.7px;width:47.5px;height:23.3px;background:#535353;"></div><svg class="i" style="left:152.2px;top:428.6px" width="4.4" height="7" viewBox="0 0 4.4 7" ><path d="M2.2 0.4L4 2.6H0.4ZM2.2 6.6L4 4.4H0.4Z" fill="none" stroke="#cfcfcf" stroke-width="0.8"/></svg><div class="t " style="left:161px;top:425.18px;width:23px;height:14.3px;font-size:11px"><svg width="23" height="14.3" viewBox="0 0 23 14.3"><text x="0" y="11" font-size="11" fill="#ececec" textLength="21" lengthAdjust="spacingAndGlyphs">文字</text></svg></div><svg class="i" style="left:438.5px;top:429px" width="10" height="7" viewBox="0 0 10 7" ><path d="M0 0.8H9.6M0 3.4H9.6M0 6H9.6" stroke="#a2a2a2" stroke-width="1.3"/></svg><div class="b " style="left:150px;top:450px;width:225.5px;height:17px;background:#414141;border:1px solid #5f5f5f;border-radius:2px;"></div><div class="b " style="left:359px;top:450px;width:1px;height:17px;background:#5f5f5f;"></div><svg class="i" style="left:151.8px;top:453.8px" width="9" height="9.5" viewBox="0 0 9 9.5" ><circle cx="3.5" cy="3.6" r="2.7" fill="none" stroke="#cfcfcf" stroke-width="1.1"/><path d="M5.6 5.8L8.4 8.8" stroke="#cfcfcf" stroke-width="1.3"/></svg><svg class="i" style="left:161px;top:456.3px" width="6" height="5" viewBox="0 0 6 5" ><path d="M0.4 0.8L3 4.2L5.6 0.8" stroke="#cfcfcf" stroke-width="1.1" fill="none"/></svg><div class="t " style="left:170px;top:451.16px;width:72px;height:15.6px;font-size:12px"><svg width="72" height="15.6" viewBox="0 0 72 15.6"><text x="0" y="12" font-size="12" fill="#ececec" textLength="70" lengthAdjust="spacingAndGlyphs">小塚明朝 Pr6N</text></svg></div><svg class="i" style="left:363.8px;top:456.3px" width="7" height="5" viewBox="0 0 7 5" ><path d="M0.4 0.8L3.5 4.2L6.6 0.8" stroke="#c8c8c8" stroke-width="1.2" fill="none"/></svg><div class="b " style="left:150px;top:471.7px;width:225.5px;height:17px;background:#414141;border:1px solid #5f5f5f;border-radius:2px;"></div><div class="b " style="left:359px;top:471.7px;width:1px;height:17px;background:#5f5f5f;"></div><div class="l" style="left:153.4px;top:475.02px;font-size:12px;line-height:12px;color:#ececec;">R</div><svg class="i" style="left:363.8px;top:477.7px" width="7" height="5" viewBox="0 0 7 5" ><path d="M0.4 0.8L3.5 4.2L6.6 0.8" stroke="#c8c8c8" stroke-width="1.2" fill="none"/></svg>
<div class="b " style="left:451px;top:161px;width:209px;height:191px;background:#f8f8f8;border-radius:5px;box-shadow:0 2px 7px rgba(0,0,0,0.32),0 0 1px rgba(0,0,0,0.35);"></div><div class="b " style="left:454px;top:162.8px;width:203.5px;height:22.8px;background:#ececec;border-radius:3px;"></div><div class="t " style="left:482.8px;top:166.27px;width:94.7px;height:14.95px;font-size:11.5px"><svg width="94.7" height="14.95" viewBox="0 0 94.7 14.95"><text x="0" y="11.5" font-size="11.5" fill="#1b1b1b" textLength="92.7" lengthAdjust="spacingAndGlyphs">データソースを選択(S)...</text></svg></div><div class="t " style="left:482.8px;top:184.47px;width:68.2px;height:14.95px;font-size:11.5px"><svg width="68.2" height="14.95" viewBox="0 0 68.2 14.95"><text x="0" y="11.5" font-size="11.5" fill="#a3a3a3" textLength="66.2" lengthAdjust="spacingAndGlyphs">PDF に書き出し</text></svg></div><div class="t " style="left:482.8px;top:203.27px;width:89.7px;height:14.95px;font-size:11.5px"><svg width="89.7" height="14.95" viewBox="0 0 89.7 14.95"><text x="0" y="11.5" font-size="11.5" fill="#a3a3a3" textLength="87.7" lengthAdjust="spacingAndGlyphs">データソースを更新(U)</text></svg></div><div class="t " style="left:482.8px;top:221.07px;width:88.7px;height:14.95px;font-size:11.5px"><svg width="88.7" height="14.95" viewBox="0 0 88.7 14.95"><text x="0" y="11.5" font-size="11.5" fill="#a3a3a3" textLength="86.7" lengthAdjust="spacingAndGlyphs">データソースを削除(R)</text></svg></div><div class="t " style="left:482.8px;top:247.07px;width:49.7px;height:14.95px;font-size:11.5px"><svg width="49.7" height="14.95" viewBox="0 0 49.7 14.95"><text x="0" y="11.5" font-size="11.5" fill="#a3a3a3" textLength="47.7" lengthAdjust="spacingAndGlyphs">プレビュー(P)</text></svg></div><div class="t " style="left:482.8px;top:265.67px;width:118.2px;height:14.95px;font-size:11.5px"><svg width="118.2" height="14.95" viewBox="0 0 118.2 14.95"><text x="0" y="11.5" font-size="11.5" fill="#a3a3a3" textLength="116.2" lengthAdjust="spacingAndGlyphs">結合ドキュメントを作成(M)...</text></svg></div><div class="t " style="left:482.8px;top:284.07px;width:132.2px;height:14.95px;font-size:11.5px"><svg width="132.2" height="14.95" viewBox="0 0 132.2 14.95"><text x="0" y="11.5" font-size="11.5" fill="#a3a3a3" textLength="130.2" lengthAdjust="spacingAndGlyphs">データフィールドの内容を更新(C)</text></svg></div><div class="t " style="left:482.8px;top:309.07px;width:118.7px;height:14.95px;font-size:11.5px"><svg width="118.7" height="14.95" viewBox="0 0 118.7 14.95"><text x="0" y="11.5" font-size="11.5" fill="#1b1b1b" textLength="116.7" lengthAdjust="spacingAndGlyphs">コンテンツ配置オプション(O)...</text></svg></div><div class="t " style="left:482.8px;top:334.87px;width:108.7px;height:14.95px;font-size:11.5px"><svg width="108.7" height="14.95" viewBox="0 0 108.7 14.95"><text x="0" y="11.5" font-size="11.5" fill="#a3a3a3" textLength="106.7" lengthAdjust="spacingAndGlyphs">更新結果のログを表示(L)</text></svg></div><div class="b " style="left:457.5px;top:240.3px;width:196.5px;height:1px;background:#dcdcdc;"></div><div class="b " style="left:457.5px;top:302.7px;width:196.5px;height:1px;background:#dcdcdc;"></div><div class="b " style="left:457.5px;top:328.1px;width:196.5px;height:1px;background:#dcdcdc;"></div>
<div class="b " style="left:426px;top:154px;width:239px;height:37px;border:5px solid #f00;box-sizing:border-box;"></div>
</body></html>
